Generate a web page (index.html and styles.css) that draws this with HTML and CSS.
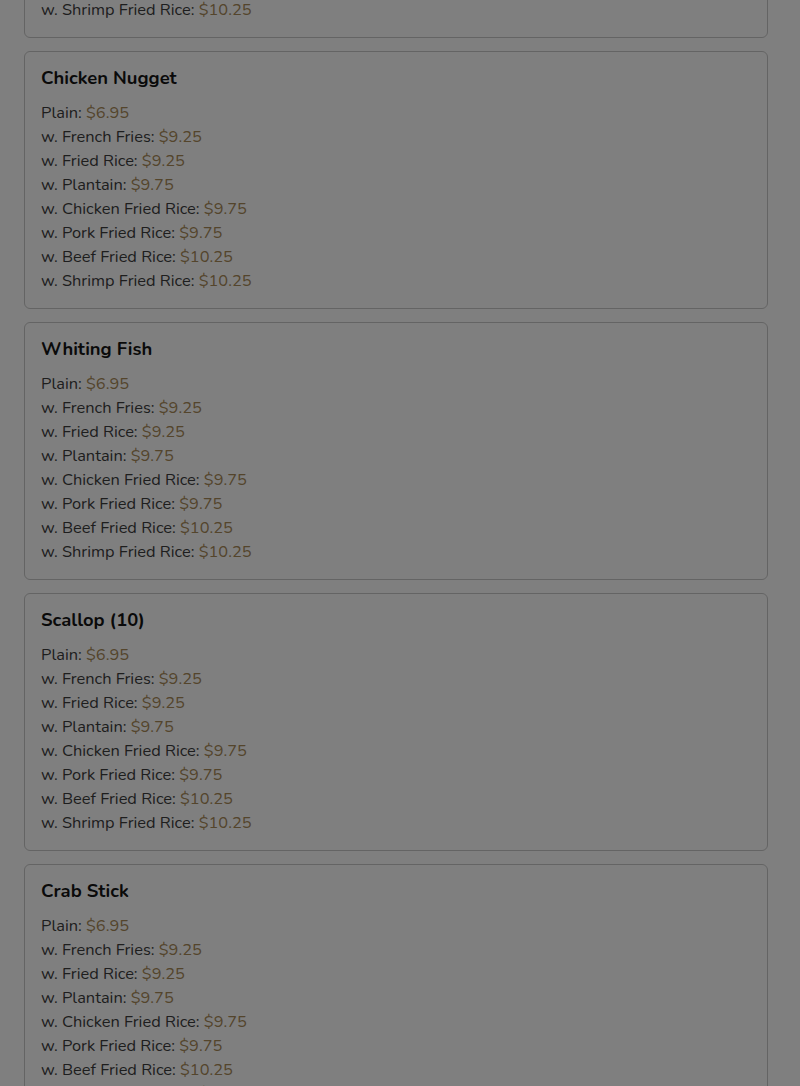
FILE: index.html
```html
<!DOCTYPE html>
<html lang="en">
<head>
<meta charset="utf-8">
<title>Menu</title>
<link rel="stylesheet" href="styles.css">
</head>
<body>
<main class="menu">
  <section class="card">
    <h3 class="card-title">Jumbo Shrimp (5)</h3>
    <ul class="options">
      <li>Plain: <span class="price">$6.95</span></li>
      <li>w. French Fries: <span class="price">$9.25</span></li>
      <li>w. Fried Rice: <span class="price">$9.25</span></li>
      <li>w. Plantain: <span class="price">$9.75</span></li>
      <li>w. Chicken Fried Rice: <span class="price">$9.75</span></li>
      <li>w. Pork Fried Rice: <span class="price">$9.75</span></li>
      <li>w. Beef Fried Rice: <span class="price">$10.25</span></li>
      <li>w. Shrimp Fried Rice: <span class="price">$10.25</span></li>
    </ul>
  </section>
  <section class="card">
    <h3 class="card-title">Chicken Nugget</h3>
    <ul class="options">
      <li>Plain: <span class="price">$6.95</span></li>
      <li>w. French Fries: <span class="price">$9.25</span></li>
      <li>w. Fried Rice: <span class="price">$9.25</span></li>
      <li>w. Plantain: <span class="price">$9.75</span></li>
      <li>w. Chicken Fried Rice: <span class="price">$9.75</span></li>
      <li>w. Pork Fried Rice: <span class="price">$9.75</span></li>
      <li>w. Beef Fried Rice: <span class="price">$10.25</span></li>
      <li>w. Shrimp Fried Rice: <span class="price">$10.25</span></li>
    </ul>
  </section>
  <section class="card">
    <h3 class="card-title">Whiting Fish</h3>
    <ul class="options">
      <li>Plain: <span class="price">$6.95</span></li>
      <li>w. French Fries: <span class="price">$9.25</span></li>
      <li>w. Fried Rice: <span class="price">$9.25</span></li>
      <li>w. Plantain: <span class="price">$9.75</span></li>
      <li>w. Chicken Fried Rice: <span class="price">$9.75</span></li>
      <li>w. Pork Fried Rice: <span class="price">$9.75</span></li>
      <li>w. Beef Fried Rice: <span class="price">$10.25</span></li>
      <li>w. Shrimp Fried Rice: <span class="price">$10.25</span></li>
    </ul>
  </section>
  <section class="card">
    <h3 class="card-title">Scallop (10)</h3>
    <ul class="options">
      <li>Plain: <span class="price">$6.95</span></li>
      <li>w. French Fries: <span class="price">$9.25</span></li>
      <li>w. Fried Rice: <span class="price">$9.25</span></li>
      <li>w. Plantain: <span class="price">$9.75</span></li>
      <li>w. Chicken Fried Rice: <span class="price">$9.75</span></li>
      <li>w. Pork Fried Rice: <span class="price">$9.75</span></li>
      <li>w. Beef Fried Rice: <span class="price">$10.25</span></li>
      <li>w. Shrimp Fried Rice: <span class="price">$10.25</span></li>
    </ul>
  </section>
  <section class="card">
    <h3 class="card-title">Crab Stick</h3>
    <ul class="options">
      <li>Plain: <span class="price">$6.95</span></li>
      <li>w. French Fries: <span class="price">$9.25</span></li>
      <li>w. Fried Rice: <span class="price">$9.25</span></li>
      <li>w. Plantain: <span class="price">$9.75</span></li>
      <li>w. Chicken Fried Rice: <span class="price">$9.75</span></li>
      <li>w. Pork Fried Rice: <span class="price">$9.75</span></li>
      <li>w. Beef Fried Rice: <span class="price">$10.25</span></li>
      <li>w. Shrimp Fried Rice: <span class="price">$10.25</span></li>
    </ul>
  </section>
</main>
<div class="overlay"></div>
</body>
</html>
```

FILE: styles.css
```css
* { box-sizing: border-box; }
html, body { margin: 0; padding: 0; }
body {
  background: #ffffff;
  font-family: "Nunito", Lato, "Open Sans", sans-serif;
  color: #3c3c3c;
  overflow: hidden;
  height: 1086px;
}
.menu {
  width: 744px;
  margin: -220px 0 0 24px;
  display: flex;
  flex-direction: column;
  gap: 13px;
}
.card {
  border: 1px solid #c8c8c8;
  border-radius: 6px;
  background: #ffffff;
  padding: 15px 16px 15px;
}
.card-title {
  margin: 0 0 12px;
  font-size: 18.4px;
  line-height: 22px;
  font-weight: 700;
  color: #141414;
}
.options {
  list-style: none;
  margin: 0;
  padding: 0;
  font-size: 16.4px;
  line-height: 24px;
}
.price { color: #a88a58; }
.overlay {
  position: fixed;
  inset: 0;
  background: rgba(0, 0, 0, 0.5);
}
```
